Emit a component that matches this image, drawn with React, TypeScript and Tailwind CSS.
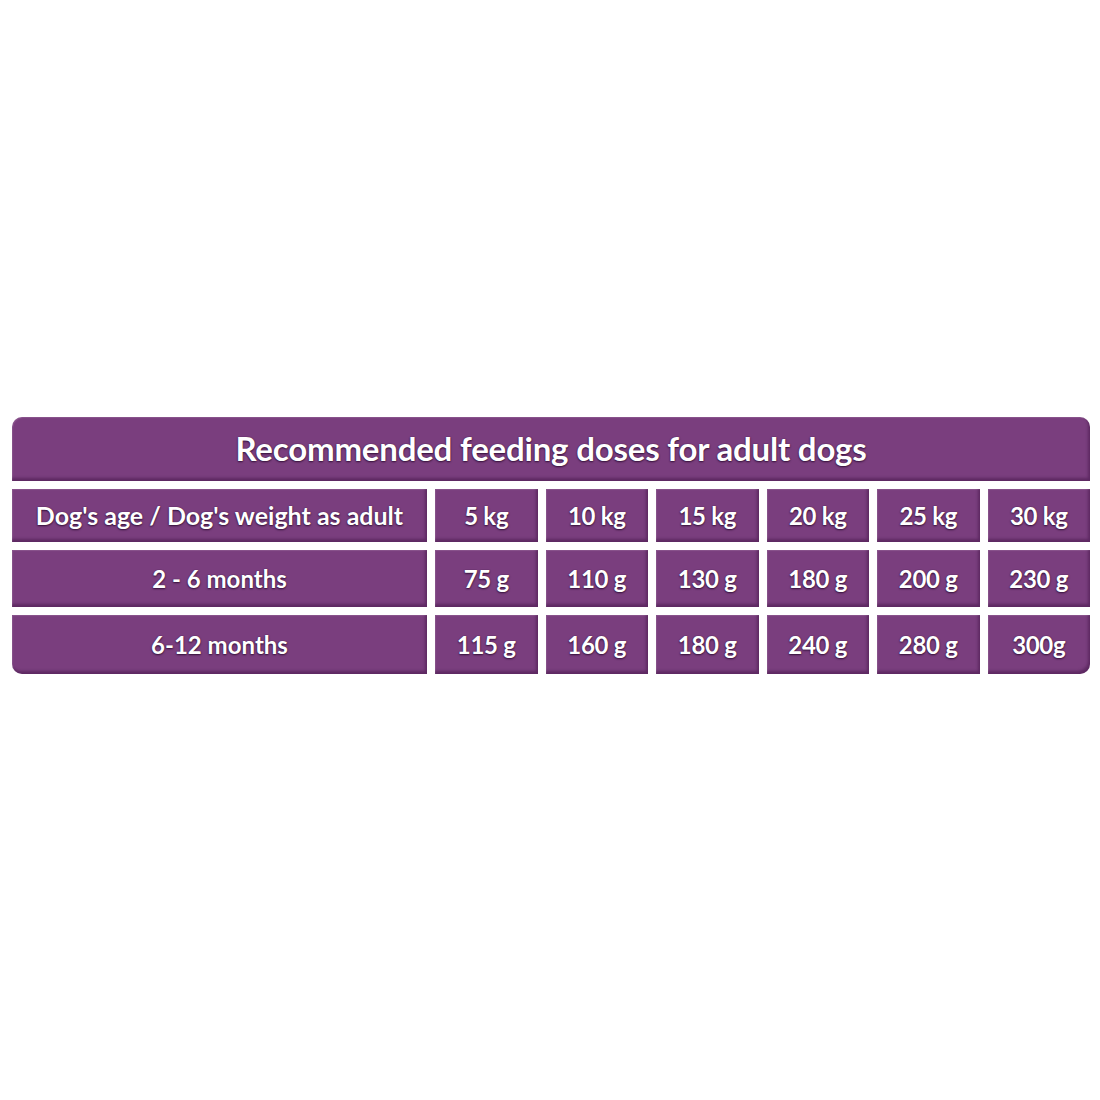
const weights = ["5 kg", "10 kg", "15 kg", "20 kg", "25 kg", "30 kg"];

const rows = [
  { age: "2 - 6 months", doses: ["75 g", "110 g", "130 g", "180 g", "200 g", "230 g"], h: "h-[57px]" },
  { age: "6-12 months", doses: ["115 g", "160 g", "180 g", "240 g", "280 g", "300g"], h: "h-[59px]" },
];

const cell =
  "flex items-center justify-center bg-[#7a3e7e] text-white font-bold shadow-[inset_-2px_-3px_3px_rgba(40,0,45,0.35),inset_1px_1px_1px_rgba(255,255,255,0.12)] [text-shadow:0_1px_2px_rgba(30,0,35,0.75),0_0_1px_rgba(30,0,35,0.6)]";

function App() {
  return (
    <div className="min-h-screen bg-white pt-[417px] pl-[12px] pr-[10px] font-['Lato',sans-serif]">
      <div className="grid grid-cols-[415px_repeat(6,1fr)] gap-[8px]">
        <div className={`${cell} col-span-7 h-[64px] rounded-t-[10px] text-[33px] tracking-[-0.2px]`}>
          Recommended feeding doses for adult dogs
        </div>

        <div className={`${cell} h-[53px] text-[25px]`}>Dog's age / Dog's weight as adult</div>
        {weights.map((w) => (
          <div key={w} className={`${cell} h-[53px] text-[24px] tracking-[-0.3px]`}>
            {w}
          </div>
        ))}

        {rows.map((r, i) => (
          <div key={r.age} className="contents">
            <div className={`${cell} ${r.h} text-[24px] ${i === rows.length - 1 ? "rounded-bl-[10px]" : ""}`}>
              {r.age}
            </div>
            {r.doses.map((d, j) => (
              <div
                key={j}
                className={`${cell} ${r.h} text-[24px] tracking-[-0.3px] ${
                  i === rows.length - 1 && j === r.doses.length - 1 ? "rounded-br-[10px]" : ""
                }`}
              >
                {d}
              </div>
            ))}
          </div>
        ))}
      </div>
    </div>
  );
}

export default App;
